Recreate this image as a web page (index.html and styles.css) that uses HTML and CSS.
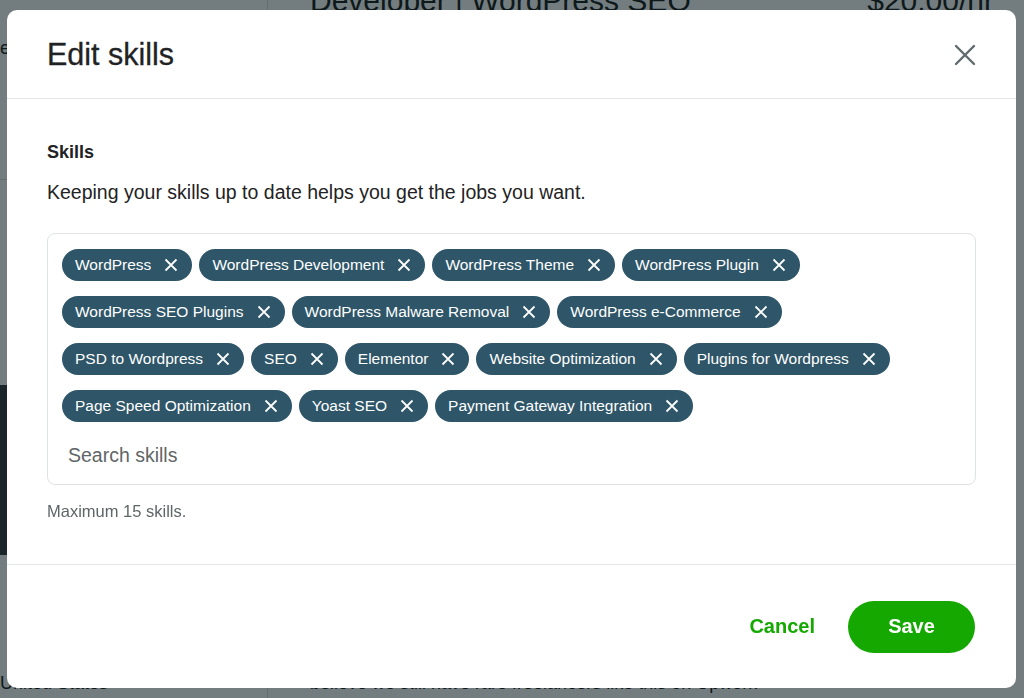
FILE: index.html
```html
<!DOCTYPE html>
<html lang="en">
<head>
    <meta charset="UTF-8">
    <meta name="viewport" content="width=device-width, initial-scale=1.0">
    <title>Edit skills</title>
    <link rel="stylesheet" href="styles.css">
</head>
<body>
    <!-- page behind the modal -->
    <div class="page">
        <div class="side">
            <div class="side-top">e</div>
            <div class="side-block"></div>
            <div class="side-photo"></div>
            <div class="side-bottom">United States</div>
        </div>
        <div class="main">
            <div class="title-row">
                <span class="job-title">Developer | WordPress SEO</span>
                <span class="rate">$20.00/hr</span>
            </div>
            <div class="main-bottom">believe we still have rare freelancers like this on Upwork</div>
        </div>
    </div>

    <div class="overlay">
        <div class="modal">
            <div class="modal-header">
                <h1>Edit skills</h1>
                <button class="close-btn" aria-label="Close">
                    <svg width="22" height="22" viewBox="0 0 22 22">
                        <path d="M2 2 L20 20 M20 2 L2 20" stroke="#5f6b6d" stroke-width="2.4" stroke-linecap="round" fill="none"/>
                    </svg>
                </button>
            </div>

            <div class="modal-body">
                <div class="label">Skills</div>
                <p class="hint">Keeping your skills up to date helps you get the jobs you want.</p>

                <div class="skills-box">
                    <div class="chips" id="chips"></div>
                    <input class="search" type="text" placeholder="Search skills">
                </div>

                <div class="note">Maximum 15 skills.</div>
            </div>

            <div class="modal-footer">
                <button class="btn-link">Cancel</button>
                <button class="btn-primary">Save</button>
            </div>
        </div>
    </div>

    <script>
        const skills = [
            'WordPress', 'WordPress Development', 'WordPress Theme', 'WordPress Plugin',
            'WordPress SEO Plugins', 'WordPress Malware Removal', 'WordPress e-Commerce',
            'PSD to Wordpress', 'SEO', 'Elementor', 'Website Optimization', 'Plugins for Wordpress',
            'Page Speed Optimization', 'Yoast SEO', 'Payment Gateway Integration'
        ];

        const chips = document.getElementById('chips');
        skills.forEach(name => {
            const chip = document.createElement('span');
            chip.className = 'chip';
            chip.innerHTML = '<span>' + name + '</span>' +
                '<svg width="14" height="14" viewBox="0 0 14 14"><path d="M1.5 1.5 L12.5 12.5 M12.5 1.5 L1.5 12.5" stroke="#fff" stroke-width="1.8" fill="none"/></svg>';
            chips.appendChild(chip);
        });
    </script>
</body>
</html>
```

FILE: styles.css
```css
* {
    box-sizing: border-box;
}

body {
    margin: 0;
    font-family: "Liberation Sans", Arial, sans-serif;
    color: #1f2324;
    background: #fff;
    overflow: hidden;
}

/* background page */
.page {
    display: grid;
    grid-template-columns: 268px 1fr;
    height: 698px;
}

.side {
    border-right: 1px solid #ddd;
    display: flex;
    flex-direction: column;
}

.side-top {
    font-size: 18px;
    padding-top: 38px;
    height: 180px;
    border-bottom: 1px solid #ddd;
}

.side-block {
    height: 205px;
}

.side-photo {
    height: 170px;
    background: #3a3f40;
}

.side-bottom {
    margin-top: auto;
    font-size: 18px;
    padding-bottom: 4px;
}

.main {
    display: flex;
    flex-direction: column;
    padding: 0 0 0 42px;
}

.title-row {
    display: flex;
    justify-content: space-between;
    margin-top: -16px;
    padding-right: 30px;
}

.job-title,
.rate {
    font-size: 30px;
}

.main-bottom {
    margin-top: auto;
    font-size: 18px;
    padding-bottom: 4px;
}

/* modal */
.overlay {
    position: fixed;
    inset: 0;
    background: rgba(0, 18, 22, 0.55);
    padding: 10px 8px 10px 7px;
}

.modal {
    width: 1009px;
    height: 678px;
    background: #fff;
    border-radius: 10px;
    display: flex;
    flex-direction: column;
}

.modal-header {
    height: 89px;
    display: flex;
    align-items: center;
    justify-content: space-between;
    padding: 0 40px 0 40px;
    border-bottom: 1px solid #e4e6e6;
}

.modal-header h1 {
    margin: 0;
    font-size: 30.5px;
    font-weight: normal;
    color: #1f2324;
    -webkit-text-stroke: 0.3px #1f2324;
}

.close-btn {
    background: none;
    border: none;
    padding: 0;
    width: 22px;
    height: 22px;
    margin-top: 2px;
    cursor: pointer;
}

.modal-body {
    flex: 1;
    padding: 41px 40px 0 40px;
    border-bottom: 1px solid #e4e6e6;
}

.label {
    font-size: 18px;
    font-weight: bold;
    line-height: 24px;
}

.hint {
    margin: 16px 0 29px;
    font-size: 19.5px;
    line-height: 24px;
}

.skills-box {
    border: 1px solid #dfe3e3;
    border-radius: 8px;
    padding: 15px 40px 18px 14px;
    height: 252px;
}

.chips {
    display: flex;
    flex-wrap: wrap;
    gap: 15px 7px;
}

.chip {
    display: inline-flex;
    align-items: center;
    gap: 13px;
    height: 32px;
    padding: 0 14px 0 13px;
    border-radius: 16px;
    background: #2e5568;
    color: #fff;
    font-size: 15.5px;
    white-space: nowrap;
}

.chip svg {
    flex-shrink: 0;
}

.search {
    display: block;
    margin-top: 21px;
    padding: 0 0 0 6px;
    border: none;
    outline: none;
    font-family: inherit;
    font-size: 19.5px;
    line-height: 24px;
    width: 100%;
}

.search::placeholder {
    color: #5f6667;
}

.note {
    margin-top: 16px;
    font-size: 16.5px;
    line-height: 20px;
    color: #5f6667;
}

.modal-footer {
    height: 123px;
    display: flex;
    align-items: center;
    justify-content: flex-end;
    gap: 33px;
    padding: 0 41px 0 0;
}

.btn-link {
    background: none;
    border: none;
    color: #14a800;
    font-family: inherit;
    font-size: 20px;
    font-weight: bold;
    cursor: pointer;
    padding: 0;
}

.btn-primary {
    width: 127px;
    height: 52px;
    border: none;
    border-radius: 26px;
    background: #14a800;
    color: #fff;
    font-family: inherit;
    font-size: 20px;
    font-weight: bold;
    cursor: pointer;
}

.btn-primary:hover {
    background: #108a00;
}
```
